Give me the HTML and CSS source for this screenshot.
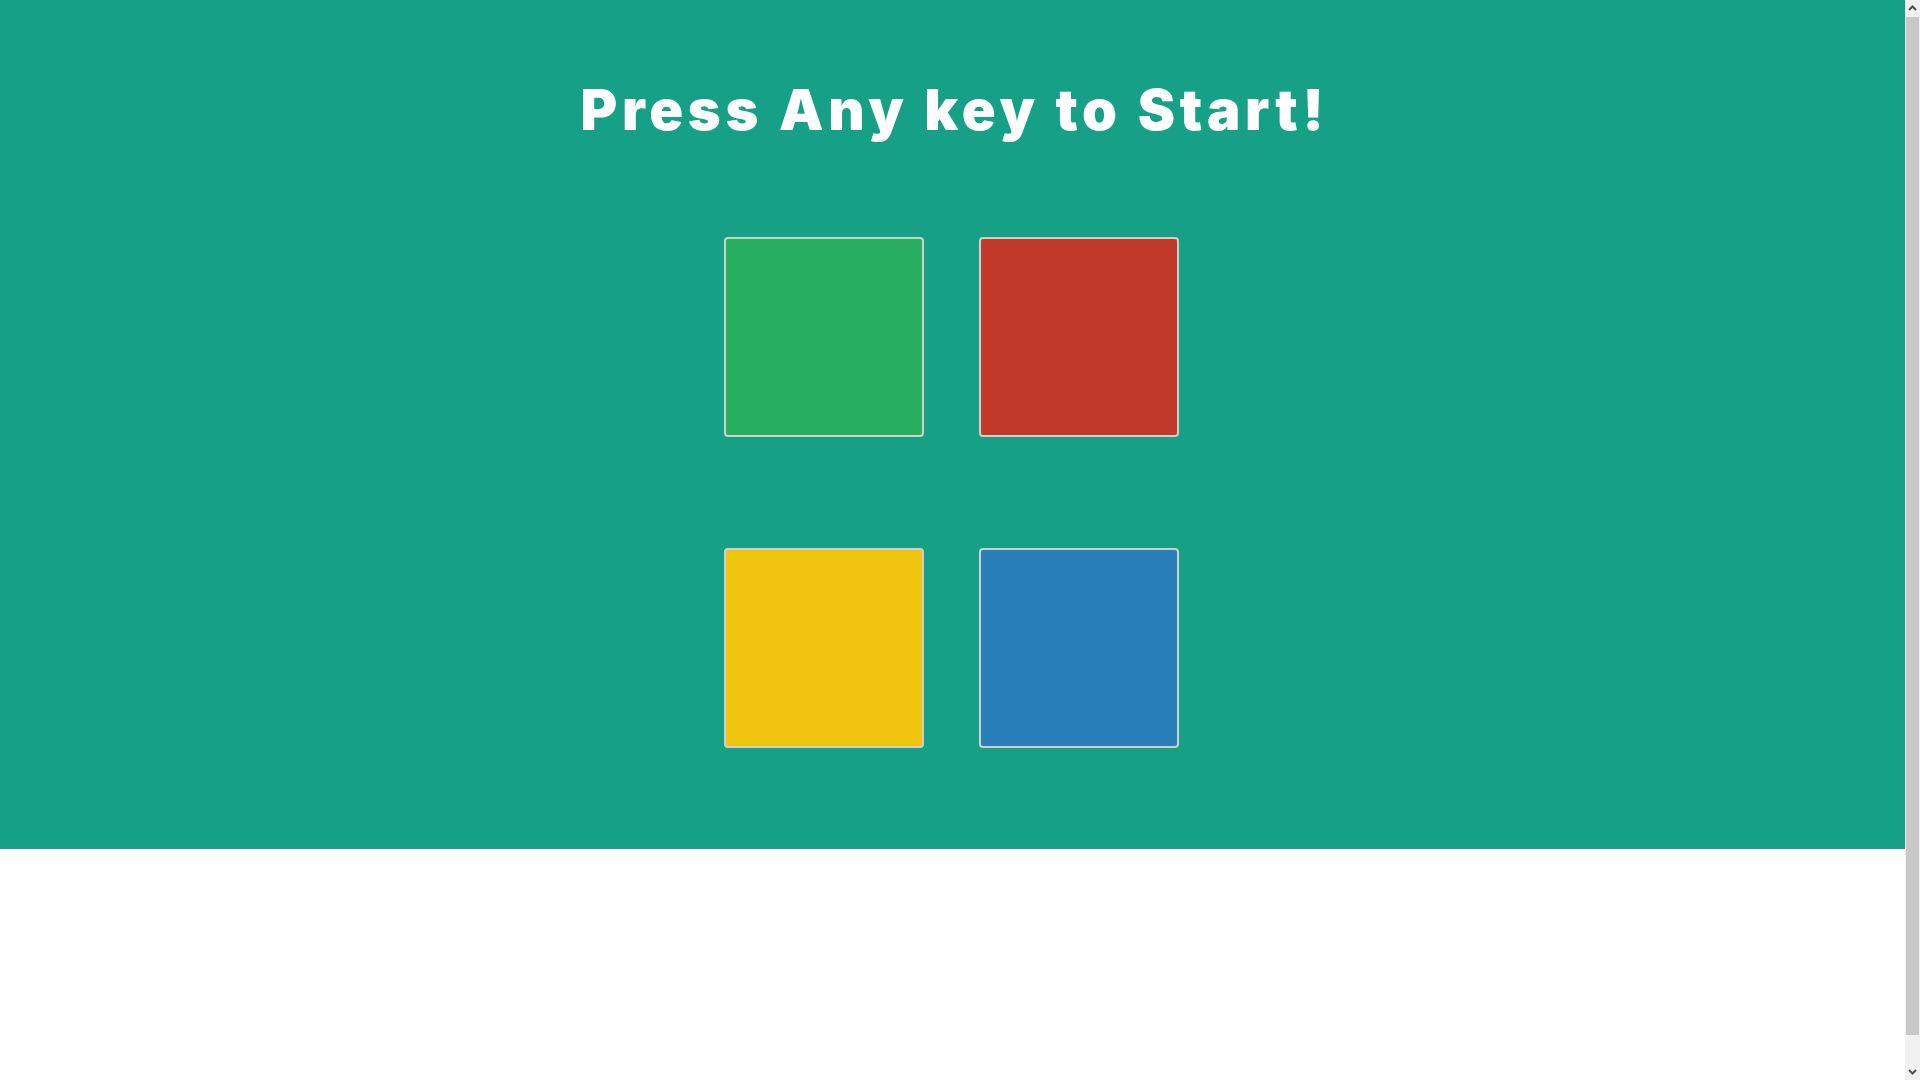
FILE: index.html
```html
<!DOCTYPE html>
<html lang="en">
<head>
<meta charset="utf-8">
<title>Simon Game</title>
<link rel="stylesheet" href="styles.css">
</head>
<body>
<main class="stage">
  <h1 class="level-title">Press Any key to Start!</h1>
  <div class="board">
    <div class="btn green"></div>
    <div class="btn red"></div>
    <div class="btn yellow"></div>
    <div class="btn blue"></div>
  </div>
</main>
<div class="after"></div>
<div class="scrollbar" aria-hidden="true">
  <svg class="arrow" width="15" height="17" viewBox="0 0 15 17"><path d="M4 10 L7.5 6.5 L11 10" fill="none" stroke="#505050" stroke-width="2"/></svg>
  <div class="track"><div class="thumb"></div></div>
  <svg class="arrow" width="15" height="17" viewBox="0 0 15 17"><path d="M4 7 L7.5 10.5 L11 7" fill="none" stroke="#505050" stroke-width="2"/></svg>
</div>
</body>
</html>
```
FILE: styles.css
```css
html, body {
  margin: 0;
  padding: 0;
  background: #ffffff;
}
html {
  scrollbar-width: none;
}
body {
  width: calc(100% - 15px);
}
.stage {
  background: #16a085;
  height: 849px;
  display: flex;
  flex-direction: column;
  align-items: center;
}
.level-title {
  margin: 82px 0 0 4px;
  font-family: Inter, "Noto Sans", sans-serif;
  font-weight: 900;
  font-size: 56px;
  line-height: 56px;
  color: #ffffff;
  letter-spacing: 4.7px;
}
.board {
  margin: 99px 2px 0 0;
  display: grid;
  grid-template-columns: 200px 200px;
  grid-auto-rows: 200px;
  column-gap: 55px;
  row-gap: 111px;
}
.btn {
  box-sizing: border-box;
  border: 2px solid #cfcfcf;
  border-radius: 4px;
}
.green { background: #27ae60; }
.red { background: #c0392b; }
.yellow { background: #f1c40f; }
.blue { background: #2980b9; }
.after {
  height: 261px;
}
.scrollbar {
  position: fixed;
  top: 0;
  right: 0;
  width: 15px;
  height: 100vh;
  background: #f1f1f1;
  display: flex;
  flex-direction: column;
}
.arrow {
  display: block;
  flex: none;
}
.track {
  flex: 1;
  position: relative;
}
.thumb {
  position: absolute;
  top: 0;
  left: 1px;
  right: 1px;
  height: 1018px;
  background: #c8c8c8;
}
```
